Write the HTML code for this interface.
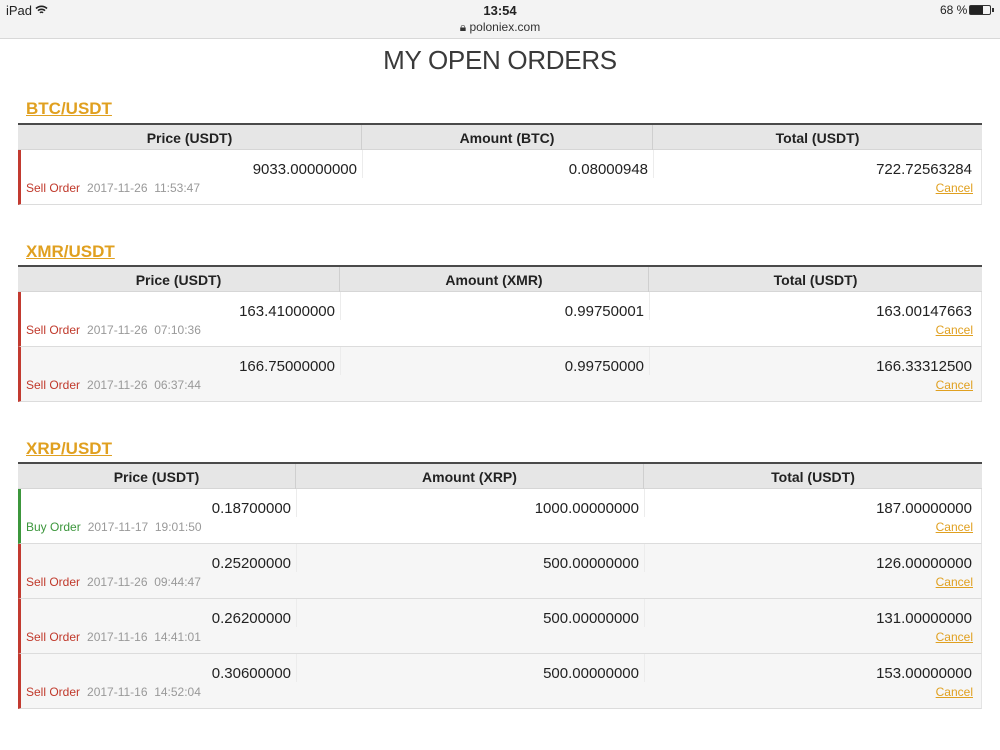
<!DOCTYPE html>
<html><head><meta charset="utf-8">
<style>
*{margin:0;padding:0;box-sizing:border-box}
body{width:1000px;height:750px;background:#fff;position:relative;overflow:hidden;font-family:"Liberation Sans",sans-serif;color:#222}
.sb{position:absolute;left:0;top:0;width:1000px;height:39px;background:#f3f3f3;border-bottom:1px solid #d8d8d8}
.a{position:absolute;white-space:nowrap}
.h1{left:0;width:1000px;text-align:center;top:45px;font-size:26px;color:#3a3a3a;letter-spacing:-0.3px}
.pair{font-size:17px;font-weight:bold;color:#e0a020;text-decoration:underline;left:26px}
.tb{position:absolute;left:18px;width:964px}
.top{position:absolute;left:0;width:964px;height:2px;background:#4a4a4a}
.hd{position:absolute;left:0;width:964px;height:25px;background:#e6e6e6;border-bottom:1px solid #d6d6d6}
.hc{position:absolute;top:0;height:25px;line-height:26px;text-align:center;font-size:14px;font-weight:bold;color:#222;border-right:1px solid #cfcfcf}
.row{position:absolute;left:0;width:964px;height:55px;border-bottom:1px solid #dcdcdc;border-left:3px solid #c23a30;border-right:1px solid #e4e4e4}
.row.g{border-left-color:#3c963c}
.row.alt{background:#f6f6f6}
.v{position:absolute;top:11px;font-size:15px;color:#222;text-align:right}
.sep{position:absolute;top:0;width:1px;height:28px;background:#ececec}
.st{position:absolute;left:5px;top:31px;font-size:12px;color:#c0392b}
.st.b{color:#3c963c}
.dt{color:#999;margin-left:7px}
.cn{position:absolute;right:8px;top:31px;font-size:12px;color:#e0a020;text-decoration:underline}
</style></head><body>
<div class="sb"></div>
<div class="a" style="left:6px;top:3px;font-size:13px;color:#222">iPad</div>
<svg class="a" style="left:35px;top:5px" width="13" height="10" viewBox="0 0 13 10"><path d="M1 3.5a8 8 0 0 1 11 0M3 5.7a5 5 0 0 1 7 0M5 7.8a2 2 0 0 1 3 0" stroke="#222" stroke-width="1.6" fill="none"/></svg>
<div class="a" style="left:0;width:1000px;text-align:center;top:3px;font-size:13px;font-weight:bold;color:#222">13:54</div>
<div class="a" style="left:0;width:1000px;text-align:center;top:20px;font-size:12px;color:#333">🔒︎ poloniex.com</div>
<div class="a" style="left:940px;top:3px;font-size:12px;color:#222">68 %</div>
<div class="a" style="left:969px;top:5px;width:22px;height:10px;border:1px solid #333;border-radius:2px"><div style="width:13px;height:8px;background:#222"></div></div>
<div class="a" style="left:992px;top:8px;width:2px;height:4px;background:#333"></div>

<div class="a h1">MY OPEN ORDERS</div>

<!-- BTC -->
<div class="a pair" style="top:99px">BTC/USDT</div>
<div class="tb" style="top:123px">
<div class="top" style="top:0"></div>
<div class="hd" style="top:2px">
<div class="hc" style="left:0;width:344px">Price (USDT)</div>
<div class="hc" style="left:344px;width:291px">Amount (BTC)</div>
<div class="hc" style="left:635px;width:329px;border-right:0">Total (USDT)</div></div>
<div class="row" style="top:27px"><div class="v" style="right:624px">9033.00000000</div><div class="sep" style="left:341px"></div><div class="v" style="right:333px">0.08000948</div><div class="sep" style="left:632px"></div><div class="v" style="right:9px">722.72563284</div><div class="st">Sell Order<span class="dt">2017-11-26 &nbsp;11:53:47</span></div><div class="cn">Cancel</div></div>
</div>

<!-- XMR -->
<div class="a pair" style="top:242px">XMR/USDT</div>
<div class="tb" style="top:265px">
<div class="top" style="top:0"></div>
<div class="hd" style="top:2px">
<div class="hc" style="left:0;width:322px">Price (USDT)</div>
<div class="hc" style="left:322px;width:309px">Amount (XMR)</div>
<div class="hc" style="left:631px;width:333px;border-right:0">Total (USDT)</div></div>
<div class="row" style="top:27px"><div class="v" style="right:646px">163.41000000</div><div class="sep" style="left:319px"></div><div class="v" style="right:337px">0.99750001</div><div class="sep" style="left:628px"></div><div class="v" style="right:9px">163.00147663</div><div class="st">Sell Order<span class="dt">2017-11-26 &nbsp;07:10:36</span></div><div class="cn">Cancel</div></div>
<div class="row alt" style="top:82px"><div class="v" style="right:646px">166.75000000</div><div class="sep" style="left:319px"></div><div class="v" style="right:337px">0.99750000</div><div class="sep" style="left:628px"></div><div class="v" style="right:9px">166.33312500</div><div class="st">Sell Order<span class="dt">2017-11-26 &nbsp;06:37:44</span></div><div class="cn">Cancel</div></div>
</div>

<!-- XRP -->
<div class="a pair" style="top:439px">XRP/USDT</div>
<div class="tb" style="top:462px">
<div class="top" style="top:0"></div>
<div class="hd" style="top:2px">
<div class="hc" style="left:0;width:278px">Price (USDT)</div>
<div class="hc" style="left:278px;width:348px">Amount (XRP)</div>
<div class="hc" style="left:626px;width:338px;border-right:0">Total (USDT)</div></div>
<div class="row g" style="top:27px"><div class="v" style="right:690px">0.18700000</div><div class="sep" style="left:275px"></div><div class="v" style="right:342px">1000.00000000</div><div class="sep" style="left:623px"></div><div class="v" style="right:9px">187.00000000</div><div class="st b">Buy Order<span class="dt">2017-11-17 &nbsp;19:01:50</span></div><div class="cn">Cancel</div></div>
<div class="row alt" style="top:82px"><div class="v" style="right:690px">0.25200000</div><div class="sep" style="left:275px"></div><div class="v" style="right:342px">500.00000000</div><div class="sep" style="left:623px"></div><div class="v" style="right:9px">126.00000000</div><div class="st">Sell Order<span class="dt">2017-11-26 &nbsp;09:44:47</span></div><div class="cn">Cancel</div></div>
<div class="row alt" style="top:137px"><div class="v" style="right:690px">0.26200000</div><div class="sep" style="left:275px"></div><div class="v" style="right:342px">500.00000000</div><div class="sep" style="left:623px"></div><div class="v" style="right:9px">131.00000000</div><div class="st">Sell Order<span class="dt">2017-11-16 &nbsp;14:41:01</span></div><div class="cn">Cancel</div></div>
<div class="row alt" style="top:192px"><div class="v" style="right:690px">0.30600000</div><div class="sep" style="left:275px"></div><div class="v" style="right:342px">500.00000000</div><div class="sep" style="left:623px"></div><div class="v" style="right:9px">153.00000000</div><div class="st">Sell Order<span class="dt">2017-11-16 &nbsp;14:52:04</span></div><div class="cn">Cancel</div></div>
</div>
</body></html>
